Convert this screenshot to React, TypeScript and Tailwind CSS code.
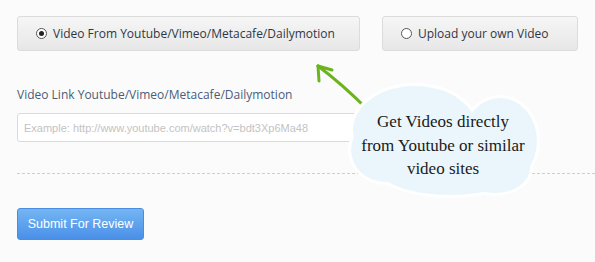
import React from 'react';

const sans = { fontFamily: '"Open Sans", "DejaVu Sans", sans-serif' };

const Radio = ({ checked }: { checked?: boolean }) => (
  <span className="flex h-[11px] w-[11px] items-center justify-center rounded-full border border-[#555] bg-white">
    {checked && <span className="h-[5px] w-[5px] rounded-full bg-[#222]" />}
  </span>
);

export default function App() {
  return (
    <div className="relative h-[262px] w-[595px] overflow-hidden bg-[#fbfbfb]">
      <div className="flex flex-col pl-[17px] pt-[16px]">
        {/* Source choice */}
        <div className="flex gap-[22px]">
          <button
            className="flex h-[35px] w-[343px] items-center gap-[6px] rounded-[3px] border border-[#dcdcdc] bg-gradient-to-b from-[#f6f6f6] to-[#e7e7e7] pl-[18px] text-[12px] text-[#2f3746]"
            style={sans}
          >
            <Radio checked />
            Video From Youtube/Vimeo/Metacafe/Dailymotion
          </button>
          <button
            className="flex h-[35px] w-[196px] items-center gap-[6px] rounded-[3px] border border-[#dcdcdc] bg-gradient-to-b from-[#f6f6f6] to-[#e7e7e7] pl-[18px] text-[12px] text-[#2f3746]"
            style={sans}
          >
            <Radio />
            Upload your own Video
          </button>
        </div>

        <label className="mt-[36px] text-[12px] leading-[16px] text-[#4b5b78]" style={sans}>
          Video Link Youtube/Vimeo/Metacafe/Dailymotion
        </label>

        <input
          className="mt-[10px] h-[29px] w-[430px] rounded-[3px] border border-[#d7dbe3] bg-white px-[6px] text-[11px] outline-none placeholder:text-[#c3c3c3]"
          style={{ fontFamily: '"Liberation Sans", Arial, sans-serif' }}
          placeholder="Example: http://www.youtube.com/watch?v=bdt3Xp6Ma48"
        />

        <div className="mt-[31px] border-t border-dashed border-[#cfcfcf]" />

        <button
          className="mt-[34px] h-[32px] w-[127px] rounded-[3px] border border-[#4a8ce0] bg-gradient-to-b from-[#74b6f2] to-[#4a8fe8] text-[12.5px] text-white"
          style={{ fontFamily: '"Liberation Sans", Arial, sans-serif' }}
        >
          Submit For Review
        </button>
      </div>

      {/* Callout drawing */}
      <svg className="pointer-events-none absolute left-0 top-0" width="595" height="262" viewBox="0 0 595 262">
        <g fill="none" stroke="#6cb41c" strokeWidth="3" strokeLinecap="round" strokeLinejoin="round">
          <path d="M367 109 Q342 84 318 66" />
          <path d="M318 66 L332 70" />
          <path d="M318 66 L319 81" />
        </g>
        <g fill="#ffffff">
          <ellipse cx="415" cy="130" rx="65" ry="47" />
          <ellipse cx="500" cy="141" rx="40" ry="46" />
          <ellipse cx="450" cy="165" rx="78" ry="33" />
          <ellipse cx="386" cy="150" rx="38" ry="35" />
          <ellipse cx="495" cy="168" rx="38" ry="28" />
        </g>
        <g fill="#eaf6fc">
          <ellipse cx="415" cy="130" rx="62" ry="44" />
          <ellipse cx="500" cy="141" rx="37" ry="43" />
          <ellipse cx="450" cy="165" rx="75" ry="30" />
          <ellipse cx="386" cy="150" rx="35" ry="32" />
          <ellipse cx="495" cy="168" rx="35" ry="25" />
        </g>
      </svg>

      <div
        className="absolute left-[350px] top-[110px] w-[186px] text-center text-[17px] leading-[23.5px] text-[#1a1a1a]"
        style={{ fontFamily: '"Liberation Serif", "Times New Roman", serif' }}
      >
        Get Videos directly
        <br />
        from Youtube or similar
        <br />
        video sites
      </div>
    </div>
  );
}
